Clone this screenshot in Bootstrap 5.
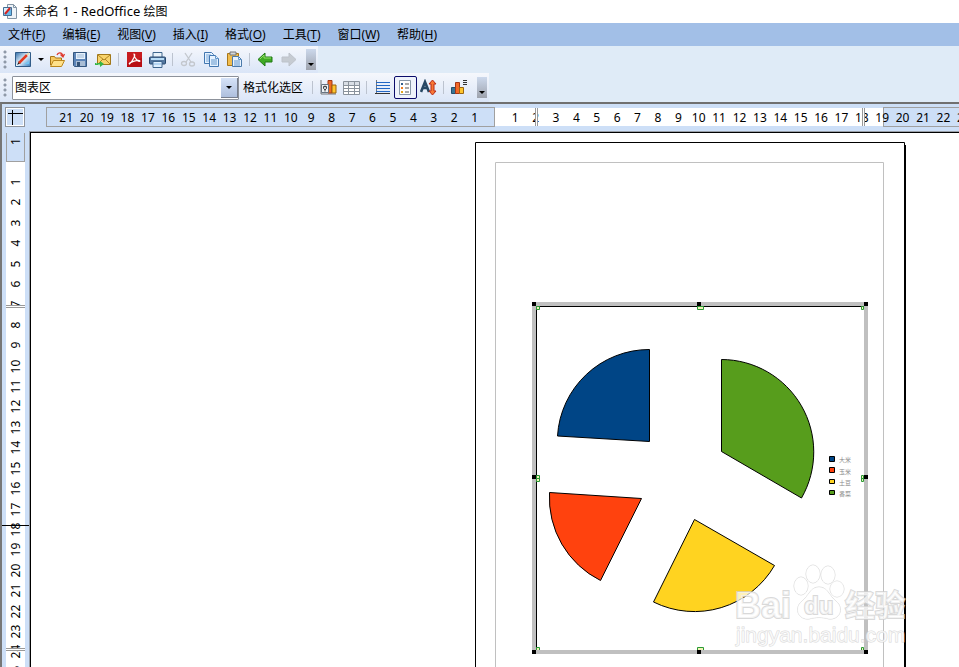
<!DOCTYPE html>
<html lang="zh-CN">
<head>
<meta charset="utf-8">
<meta name="viewport" content="width=device-width, initial-scale=1">
<title>未命名 1 - RedOffice 绘图</title>
<link href="https://cdn.jsdelivr.net/npm/bootstrap@5.3.0/dist/css/bootstrap.min.css" rel="stylesheet">
<style>
body { font: 12px/16px "Noto Sans", "Noto Sans CJK SC", sans-serif; color: #000; background: #dfebf7; }
button, select { font: inherit; color: inherit; }
.titlebar { height: 23px; padding: 0 3px; gap: 5px; background: #fff; }
.app-name { font-size: 13px; }
.menus { height: 23px; padding: 0 8px; gap: 17px; background: #a2bfe7; }
.menus a { color: #000; text-decoration: none; white-space: nowrap; }
.menus u { text-underline-offset: 2px; }
.tools { background: linear-gradient(#f5f7fc, #dae5f7); }
.tools-main { height: 27px; padding-right: 2px; }
.tools-chart { height: 29px; padding-right: 2px; }
.grip { width: 12px; height: 20px; background: radial-gradient(circle at 5px 2px, #8f99a8 1px, transparent 2px) 0 0 / 12px 5px; }
.tool { width: 23px; height: 23px; padding: 0; border: 0; background: none; }
.tool.pressed { border: 1px solid #0b0b6b; border-radius: 2px; background: #eef2fb; }
.tool-drop { width: 11px; }
.divide { width: 1px; height: 13px; margin: 0 4px 0 3px; background: #bcc3cf; }
.overflow-tab { width: 10px; height: 21px; margin-left: 6px; padding: 0; border: 0; background: linear-gradient(#ccd8ec, #9ea3ad); }
.tri { width: 0; height: 0; border: 3px solid transparent; border-top-color: #000; border-bottom: 0; }
.picker { width: 227px; height: 24px; }
.picker select { width: 100%; height: 100%; padding: 0 2px; appearance: none; border: 1px solid #8d929b; border-radius: 1px; background: #fff; }
.picker span { right: 1px; top: 2px; width: 17px; height: 20px; pointer-events: none; background: linear-gradient(#d6e3f8, #aebfdd); border: solid #777e8d; border-width: 0 1px 1px 0; }
.picker-note { width: 70px; padding-left: 4px; white-space: nowrap; }
.workspace { border-top: 2px solid #707070; border-left: 2px solid #777; background: #cddff7; min-height: 0; }
.rail { width: 27px; }
.corner { width: 20px; height: 20px; margin: 3px 0 6px 3px; padding: 0; border: 1px solid #8f949c; outline: 1px solid #fff; outline-offset: -2px; background: #cddff7; line-height: 0; }
.hruler { height: 20px; margin: 3px 0 4px 17px; }
.beyond { background: #cddff7; border: 1px solid #a0a0a0; }
.h-left { width: 449px; padding: 1px 9px 0; }
.h-right { margin: 1px 0; background: #fff; }
.h-edge { left: 388px; right: 0; top: -1px; bottom: -1px; border-right: 0; }
.h-scale { width: 469px; left: 10px; top: 1px; bottom: 0; }
.tick { flex: 1 1 0; display: flex; align-items: center; justify-content: center; min-width: 0; min-height: 0; }
.vruler { width: 19px; margin-left: 4px; background: #fff; }
.v-top { height: 29px; border-top: 0; padding-bottom: 10px; }
.v-scale { height: 510px; margin-top: 10px; flex: none; }
.vruler .tick { writing-mode: vertical-rl; transform: rotate(180deg); }
.stop-x { width: 3px; top: 0; bottom: 0; border: solid #999; border-width: 0 1px; background: #fff; }
.stop-y { height: 3px; left: 0; right: 0; border: solid #999; border-width: 1px 0; background: #fff; }
.x-a { left: 40px; } .x-b { left: 367px; }
.y-a { top: 172px; } .y-b { top: 515px; }
.pointer-y { height: 1px; left: -4px; right: -4px; top: 392px; background: #000; }
.canvas { border: solid #9aa0a8; border-width: 1px 0 0 1px; }
.sheet { border: solid #000; border-width: 1px 0 0 1px; background: #fff; }
.legend-text { font-size: 6px; fill: #888; }
</style>
<script src="https://cdn.jsdelivr.net/npm/bootstrap@5.3.0/dist/js/bootstrap.bundle.min.js"></script>
</head>
<body class="vh-100 d-flex flex-column overflow-hidden">

<header class="titlebar d-flex align-items-center flex-shrink-0">
  <svg width="15" height="17" viewBox="0 0 15 17"><path d="M4.500 1.500h6l3 3v11h-9z" fill="#eef3f8" stroke="#8395a5"/><path d="M10.500 1.500v3h3" fill="none" stroke="#8395a5"/><path d="M.5 4.500h8v8h-8z" fill="#d8edfb" stroke="#426e95"/><path d="M1 10l7-5v7H1z" fill="#68b9ea"/><path d="M2 11l5-6" stroke="#d82520" stroke-width="2"/></svg>
  <span>未命名<span class="app-name"> 1 - RedOffice </span>绘图</span>
</header>

<nav class="menus d-flex align-items-center flex-shrink-0" aria-label="菜单">
  <a href="#">文件(<u>F</u>)</a><a href="#">编辑(<u>E</u>)</a><a href="#">视图(<u>V</u>)</a><a href="#">插入(<u>I</u>)</a><a href="#">格式(<u>O</u>)</a><a href="#">工具(<u>T</u>)</a><a href="#">窗口(<u>W</u>)</a><a href="#">帮助(<u>H</u>)</a>
</nav>

<div class="tools tools-main d-flex align-items-center align-self-start flex-shrink-0">
  <div class="grip"></div>
  <button class="tool d-flex align-items-center justify-content-center" aria-label="新建"><svg width="17" height="17" viewBox="0 0 17 17"><defs><linearGradient id="sky" x2="1" y2="1"><stop stop-color="#2f6ca8"/><stop offset=".5" stop-color="#e8f6ff"/><stop offset="1" stop-color="#2f78bb"/></linearGradient></defs><path d="M.5 1.500h15v14H.5z" fill="url(#sky)" stroke="#315c88"/><path d="M2 14l2-4 2 2z" fill="#222"/><path d="M4 12l8-8" stroke="#e33a22" stroke-width="2.500"/><path d="M12 4l2-2" stroke="#e9d9b0" stroke-width="2"/><path d="M9 13h5v-3z" fill="#75c5f2"/></svg></button>
  <button class="tool tool-drop d-flex align-items-center justify-content-center" aria-label="新建选项"><span class="tri"></span></button>
  <button class="tool d-flex align-items-center justify-content-center" aria-label="打开"><svg width="17" height="17" viewBox="0 0 17 17"><path d="M1.500 14V5.500h4l1 1.500h6v3" fill="#f6ca62" stroke="#a87517"/><path d="M1.500 15.500l3-6h11l-3 6z" fill="#ffe18a" stroke="#bb861c"/><path d="M8 4c1-3 5-3 6 1M11.500 3.500L14 6l1.500-3" fill="none" stroke="#df3b31" stroke-width="1.300"/></svg></button>
  <button class="tool d-flex align-items-center justify-content-center" aria-label="保存"><svg width="17" height="17" viewBox="0 0 17 17"><path d="M1.500 1.500h13v14h-12l-1-1z" fill="#5c84b8" stroke="#34567f"/><path d="M4 2h9v6H4z" fill="#e6f0fb"/><path d="M5 4h7M5 6h7" stroke="#9db8d6"/><path d="M4 10h9v5H4z" fill="#a9bdd5"/><path d="M5 11h3v4H5z" fill="#345277"/></svg></button>
  <button class="tool d-flex align-items-center justify-content-center" aria-label="发送邮件"><svg width="17" height="17" viewBox="0 0 17 17"><path d="M2.500 3.500h13v10h-13z" fill="#f8d36c" stroke="#a2781a"/><path d="M3 4l6 5 6-5M3 13l5-5M15 13l-5-5" fill="none" stroke="#b18525"/><path d="M0 12h5v-2l4 3-4 3v-2H0z" fill="#37b447"/><path d="M1 12h1m1 2h2" stroke="#c9f3c4"/></svg></button>
  <div class="divide"></div>
  <button class="tool d-flex align-items-center justify-content-center" aria-label="导出 PDF"><svg width="17" height="17" viewBox="0 0 17 17"><path d="M1 1h15v15H1z" fill="#b80f14"/><path d="M1 1h15v6L1 12z" fill="#d62a2c" opacity=".5"/><path d="M8 3c2 0-.5 6-4.500 10-2-1 9-5 10.500-3-1 2-6-3-6-7z" fill="none" stroke="#fff" stroke-width="1.200"/></svg></button>
  <button class="tool d-flex align-items-center justify-content-center" aria-label="打印"><svg width="17" height="17" viewBox="0 0 17 17"><path d="M4 1.500h9V7H4z" fill="#e8f2fa" stroke="#3e678e"/><rect x=".5" y="6" width="16" height="7" rx="1" fill="#55779f" stroke="#27486e"/><path d="M2 8h13" stroke="#b9ddf7" stroke-width="2"/><path d="M4 10.500h9v6H4z" fill="#e0f0ff" stroke="#40678f"/><path d="M5 13h7" stroke="#8bbbe8"/></svg></button>
  <div class="divide"></div>
  <button class="tool d-flex align-items-center justify-content-center" aria-label="剪切"><svg width="17" height="17" viewBox="0 0 17 17" fill="none" stroke="#c3c7cd" stroke-width="1.300"><path d="M5 2l6 9M12 2l-6 9"/><ellipse cx="4" cy="12.500" rx="2.500" ry="2"/><ellipse cx="12" cy="13" rx="2.500" ry="2"/></svg></button>
  <button class="tool d-flex align-items-center justify-content-center" aria-label="复制"><svg width="17" height="17" viewBox="0 0 17 17" fill="#e5f2ff" stroke="#4277b0"><path d="M1.500 1.500h7l2 2v9h-9z"/><path d="M3 4h5M3 6h5M3 8h5M3 10h5" stroke="#7aa7d7"/><path d="M6.500 4.500h6l3 3v8h-9z"/><path d="M12.500 4.500v3h3M8 9h6M8 11h6M8 13h6" stroke="#6195cb"/></svg></button>
  <button class="tool d-flex align-items-center justify-content-center" aria-label="粘贴"><svg width="17" height="17" viewBox="0 0 17 17"><path d="M1.500 2.500h11v12h-11z" fill="#f1bd4e" stroke="#a8771a"/><path d="M4 1h6v3H4z" fill="#d2d7dc" stroke="#777"/><path d="M6.500 5.500h6l3 3v7h-9z" fill="#e8f3ff" stroke="#4c7aaa"/><path d="M12.500 5.500v3h3M8 10h6M8 12h6M8 14h6" fill="none" stroke="#6296cb"/></svg></button>
  <div class="divide"></div>
  <button class="tool d-flex align-items-center justify-content-center" aria-label="撤消"><svg width="17" height="17" viewBox="0 0 17 17"><path d="M1 8.500L8 2v4h7v5H8v4z" fill="#3faa24" stroke="#217a15"/><path d="M3 8l4-4v3h7" fill="none" stroke="#92df65"/></svg></button>
  <button class="tool d-flex align-items-center justify-content-center" aria-label="恢复"><svg width="17" height="17" viewBox="0 0 17 17"><path d="M16 8.500L9 2v4H2v5h7v4z" fill="#c6cbd2" stroke="#bdc2ca"/></svg></button>
  <button class="overflow-tab d-flex align-items-end justify-content-center pb-1" aria-label="更多标准工具"><span class="tri"></span></button>
</div>

<div class="tools tools-chart d-flex align-items-center align-self-start flex-shrink-0">
  <div class="grip"></div>
  <div class="picker position-relative">
    <select id="part" class="d-block"><option>图表区</option></select>
    <span class="position-absolute d-flex align-items-center justify-content-center"><i class="tri"></i></span>
  </div>
  <label class="picker-note" for="part">格式化选区</label>
  <div class="d-flex align-items-center">
  <div class="divide"></div>
  <button class="tool d-flex align-items-center justify-content-center" aria-label="图表类型"><svg width="17" height="17" viewBox="0 0 17 17"><path d="M1 1v14h15" fill="none" stroke="#777"/><path d="M8 1.500h4V14H8z" fill="#ef6b25" stroke="#a33916"/><path d="M12 6h4v8h-4z" fill="#ffc52e" stroke="#99620f"/><path d="M1.500 5.500h7v8h-7z" fill="#eef1f5" stroke="#687481"/><path d="M5 6.500v6" stroke="#444"/><path d="M3.500 7.500h3v2l-1.500 1.500-1.500-1.500z" fill="#ccd3da" stroke="#444"/></svg></button>
  <button class="tool d-flex align-items-center justify-content-center" aria-label="数据表"><svg width="17" height="17" viewBox="0 0 17 17"><path d="M.5 2.500h16v13H.5z" fill="#fff" stroke="#8a929c"/><path d="M1 3h15v3H1z" fill="#d9dee5"/><path d="M.5 6.500h16M.5 9.500h16M.5 12.500h16M5.500 3v12M11.500 3v12" stroke="#8a929c"/></svg></button>
  <div class="divide"></div>
  <button class="tool d-flex align-items-center justify-content-center" aria-label="水平网格"><svg width="17" height="17" viewBox="0 0 17 17"><path d="M2.500 1v14" stroke="#777"/><path d="M2 3.500h14M2 6.500h14M2 9.500h14M2 12.500h14" stroke="#2367c4"/><path d="M1 14.500h15" stroke="#333"/></svg></button>
  <button class="tool pressed d-flex align-items-center justify-content-center" aria-label="图例" aria-pressed="true"><svg width="17" height="17" viewBox="0 0 17 17"><path d="M2.500 1.500h11v14h-11z" fill="#fff" stroke="#8897a8"/><path d="M4 4h2v2H4z" fill="#345f8c"/><path d="M4 8h2v2H4z" fill="#f37e20"/><path d="M4 12h2v2H4z" fill="#e1a51e"/><path d="M8 5h4M8 9h4M8 13h4" stroke="#555"/></svg></button>
  <button class="tool d-flex align-items-center justify-content-center" aria-label="缩放文字"><svg width="17" height="17" viewBox="0 0 17 17"><path d="M1 13L5 3l4 10M3 9h5" fill="none" stroke="#274864" stroke-width="2.600"/><path d="M12.500 1l3.500 4h-2v7h2l-3.500 4L9 12h2V5H9z" fill="#f77735" stroke="#b82b16"/></svg></button>
  <div class="divide"></div>
  <button class="tool d-flex align-items-center justify-content-center" aria-label="自动布局"><svg width="17" height="17" viewBox="0 0 17 17"><path d="M.5 8.500h4v6h-4z" fill="#397494" stroke="#234f6c"/><path d="M4.500 3.500h4v11h-4z" fill="#f26927" stroke="#a63616"/><path d="M8.500 8.500h4v6h-4z" fill="#ffc52d" stroke="#9b6512"/><path d="M12 1.500h4M12 3.500h4M12 5.500h4" stroke="#333"/></svg></button>
  <button class="overflow-tab d-flex align-items-end justify-content-center pb-1" aria-label="更多图表工具"><span class="tri"></span></button>
  </div>
</div>

<main class="workspace flex-grow-1 d-flex overflow-hidden">
  <div class="rail d-flex flex-column flex-shrink-0">
    <button class="corner flex-shrink-0" aria-label="标尺原点"><svg width="18" height="18" viewBox="0 0 18 18"><path d="M2 5.500h15M6.500 2v15" stroke="#000"/></svg></button>
    <div class="vruler position-relative flex-grow-1 d-flex flex-column overflow-visible">
      <div class="beyond v-top d-flex flex-column flex-shrink-0" data-from="1" data-to="1"></div>
      <div class="v-scale d-flex flex-column" data-from="1" data-to="25"></div>
      <div class="stop-y y-a position-absolute"></div>
      <div class="stop-y y-b position-absolute"></div>
      <div class="pointer-y position-absolute"></div>
    </div>
  </div>
  <div class="flex-grow-1 d-flex flex-column overflow-hidden">
    <div class="hruler d-flex flex-shrink-0">
      <div class="beyond h-left d-flex flex-shrink-0" data-from="21" data-to="1"></div>
      <div class="h-right position-relative flex-grow-1 overflow-visible">
        <div class="beyond h-edge position-absolute"></div>
        <div class="h-scale position-absolute d-flex" data-from="1" data-to="23"></div>
        <div class="stop-x x-a position-absolute"></div>
        <div class="stop-x x-b position-absolute"></div>
      </div>
    </div>
    <div class="canvas flex-grow-1 d-flex overflow-hidden"><div class="sheet flex-grow-1 overflow-hidden">
      <svg class="d-block" width="100%" height="100%" role="img" aria-label="饼图">
        <g transform="translate(-31 -133)">
          <path d="M905.500 145v540" stroke="#000"/>
          <path d="M475.500 700V142.500h429V700" fill="#fff" stroke="#000"/>
          <path d="M495.500 700V162.500h388V700" fill="none" stroke="#c0c0c0"/>
          <path d="M536.500 650V306.500H864" fill="none" stroke="#000"/>
          <path d="M534 304h332v348H534z" fill="none" stroke="#c0c0c0" stroke-width="4"/>
          <g fill="#f3f3b8" stroke="#2a9a35"><path d="M697.500 306.500h6v3h-6zM536.500 306.500h3v3h-3zM861.500 306.500h2v3h-2zM536.500 475.500h3v6h-3zM536 478.500h4M861.500 475.500h2v6h-2zM861 478.500h3M697.500 650v-2.500h6v2.500M536.500 650v-2.500h3v2.500M861.500 650v-2.500h2v2.500"/></g>
          <path d="M532 302h4v4h-4zM697 302h4v4h-4zM864 302h4v4h-4zM532 475h4v4h-4zM864 475h4v4h-4zM532 650h4v4h-4zM697 650h4v4h-4zM864 650h4v4h-4z"/>
          <g stroke="#000" stroke-linejoin="round">
            <path d="M649.500 441.500V349.500A92 92 0 0 0 557.500 436z" fill="#004586"/>
            <path d="M721.500 451.500V359.500A92.500 92.500 0 0 1 801.500 498z" fill="#579d1c"/>
            <path d="M694.500 519.500L774.500 565.500A92.500 92.500 0 0 1 653.500 602z" fill="#ffd320"/>
            <path d="M641.500 498.500L600.500 580.500A92.500 92.500 0 0 1 549.500 492.500z" fill="#ff420e"/>
            <path d="M829.500 456.500h5v5h-5z" fill="#004586"/>
            <path d="M829.500 467.500h5v5h-5z" fill="#ff420e"/>
            <path d="M829.500 479.500h5v4h-5z" fill="#ffd320"/>
            <path d="M829.500 490.500h5v4h-5z" fill="#579d1c"/>
          </g>
          <g class="legend-text"><text x="839" y="462">大米</text><text x="839" y="474">玉米</text><text x="839" y="485">土豆</text><text x="839" y="496">番菜</text></g>
          <g fill="#fff" fill-opacity=".7" stroke="#cfcfcf" stroke-opacity=".8" font-family="Liberation Sans, Noto Sans CJK SC, sans-serif" paint-order="stroke">
            <g font-weight="bold">
              <text x="735" y="618" font-size="36" stroke-width="2">Bai</text>
              <ellipse cx="801" cy="586" rx="7" ry="9"/><ellipse cx="813" cy="574" rx="7" ry="9"/><ellipse cx="828" cy="575" rx="7" ry="9"/><ellipse cx="837" cy="589" rx="7" ry="8"/>
              <path d="M819 587c-9 0-10 9-17 14-9 8-3 19 7 18 7-2 13-2 20 0 10 1 16-10 7-18-7-5-8-14-17-14z"/>
              <text x="804" y="614" font-size="24" stroke-width="2">du</text>
              <text x="845" y="616" font-size="30" stroke-width="2">经验</text>
            </g>
            <text x="736" y="642" font-size="21" stroke-width="1">jingyan.baidu.com</text>
          </g>
        </g>
      </svg>
    </div></div>
  </div>
</main>

<script>
// Fill each ruler section with its unit labels, counting up or down.
document.querySelectorAll('[data-from]').forEach(function (ruler) {
  var from = Number(ruler.dataset.from), to = Number(ruler.dataset.to);
  var step = from > to ? -1 : 1;
  for (var n = from; n !== to + step; n += step) {
    var tick = document.createElement('span');
    tick.className = 'tick';
    tick.textContent = n;
    ruler.appendChild(tick);
  }
});
</script>
</body>
</html>
